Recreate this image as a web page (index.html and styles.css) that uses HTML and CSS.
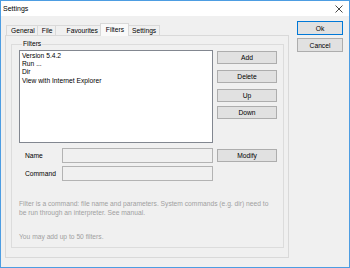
FILE: index.html
```html
<!DOCTYPE html>
<html lang="en">
<head>
  <meta charset="UTF-8" />
  <title>Settings</title>
  <link rel="stylesheet" href="styles.css">
</head>
<body>
  <div class="window">
    <div class="titlebar">
      <span class="title">Settings</span>
      <svg class="close" width="8" height="8" viewBox="0 0 8 8"><path d="M0.5 0.5L7.5 7.5M7.5 0.5L0.5 7.5" stroke="#333" stroke-width="0.9" fill="none"/></svg>
    </div>
    <div class="client">
      <div class="tabctl">
        <div class="tabs">
          <span class="tab tab-general">General</span>
          <span class="tab tab-file">File</span>
          <span class="tab tab-fav">Favourites</span>
          <span class="tab active">Filters</span>
          <span class="tab">Settings</span>
        </div>
        <div class="panel">
          <fieldset class="group">
            <legend>Filters</legend>
            <div class="top-row">
              <div class="list">
                <div>Version 5.4.2</div>
                <div>Run ...</div>
                <div>Dir</div>
                <div>View with Internet Explorer</div>
              </div>
              <div class="side-btns">
                <button class="btn">Add</button>
                <button class="btn">Delete</button>
                <button class="btn">Up</button>
                <button class="btn">Down</button>
              </div>
            </div>
            <div class="field-row">
              <label>Name</label>
              <span class="input"></span>
              <button class="btn">Modify</button>
            </div>
            <div class="field-row">
              <label>Command</label>
              <span class="input"></span>
            </div>
            <p class="note">Filter is a command: file name and parameters. System commands (e.g. dir) need to be run through an interpreter. See manual.</p>
            <p class="note limit">You may add up to 50 filters.</p>
          </fieldset>
        </div>
      </div>
      <div class="dlg-btns">
        <button class="btn default">Ok</button>
        <button class="btn">Cancel</button>
      </div>
    </div>
  </div>
</body>
</html>
```

FILE: styles.css
```css
body {
  margin: 0;
  font-family: "Liberation Sans", Arial, sans-serif;
  font-size: 6.7px;
  color: #000;
}
.window {
  width: 350px;
  height: 268px;
  box-sizing: border-box;
  border: 1px solid #4d9de2;
  background: #f0f0f0;
}
.titlebar {
  height: 15px;
  background: #fff;
  display: flex;
  align-items: center;
  justify-content: space-between;
  padding: 0 6px 0 2px;
}
.title {
  font-size: 7px;
}
.close {
  display: block;
}
.client {
  display: flex;
  padding: 5px 0 0 4px;
}
.tabctl {
  width: 284px;
  padding-top: 2px;
}
.tabs {
  display: flex;
  align-items: flex-end;
  height: 12px;
  padding-left: 1px;
  position: relative;
  z-index: 1;
}
.tab {
  height: 10px;
  line-height: 10px;
  padding: 0 3px;
  border: 1px solid #d9d9d9;
  border-bottom: none;
  box-sizing: border-box;
  margin-right: -1px;
  background: #f0f0f0;
}
.tab-general {
  padding: 0 2px 0 4px;
}
.tab-file {
  padding: 0 2px 0 4px;
}
.tab-fav {
  padding: 0 2px 0 11px;
}
.tab.active {
  height: 13px;
  line-height: 12px;
  background: #f9f9f9;
  margin-bottom: -1px;
  padding: 0 4px 0 5px;
}
.panel {
  height: 223px;
  box-sizing: border-box;
  border: 1px solid #d9d9d9;
  padding: 4px 4px 9px 5px;
}
.group {
  margin: 0;
  height: 100%;
  box-sizing: border-box;
  border: 1px solid #dcdcdc;
  padding: 2px 0 0 7px;
  min-width: 0;
}
.group legend {
  padding: 0 1px;
  margin-left: 3px;
  line-height: 8px;
}
.top-row {
  display: flex;
  gap: 4px;
}
.list {
  width: 194px;
  height: 93px;
  box-sizing: border-box;
  border: 1px solid #828790;
  background: #fff;
  padding: 1px 2px;
  line-height: 8.2px;
}
.side-btns {
  display: flex;
  flex-direction: column;
  gap: 6px;
  padding-top: 1px;
}
.side-btns .btn:nth-child(4) {
  margin-top: -2px;
}
.btn {
  width: 60px;
  height: 13px;
  box-sizing: border-box;
  border: 1px solid #adadad;
  background: #e1e1e1;
  font-family: inherit;
  font-size: 6.7px;
  padding: 0;
  line-height: 11px;
  color: #000;
}
.field-row {
  display: flex;
  align-items: center;
  margin-top: 5px;
}
.field-row + .field-row {
  margin-top: 3px;
}
.field-row label {
  width: 43px;
  padding-left: 6px;
  box-sizing: border-box;
}
.field-row .input {
  width: 151px;
  height: 15px;
  box-sizing: border-box;
  border: 1px solid #b3b3b3;
  background: #f0f0f0;
}
.field-row .btn {
  margin-left: 4px;
}
.note {
  margin: 18px 0 0 0;
  width: 256px;
  color: #a0a0a0;
  line-height: 9px;
}
.note.limit {
  margin-top: 15px;
}
.dlg-btns {
  display: flex;
  flex-direction: column;
  gap: 3px;
  margin-left: 8px;
}
.dlg-btns .btn {
  width: 46px;
  height: 14px;
}
.dlg-btns .default {
  border-color: #0078d7;
}
```
